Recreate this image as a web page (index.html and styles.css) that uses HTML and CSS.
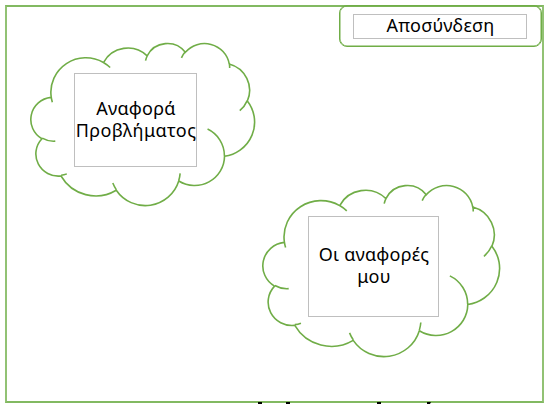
FILE: index.html
```
<!DOCTYPE html>
<html lang="el">
<head>
<meta charset="utf-8">
<title>Αναφορές</title>
<link rel="stylesheet" href="styles.css">
</head>
<body>
<main class="screen">
  <header class="bar">
    <div class="logout"><button class="label logout-label">Αποσύνδεση</button></div>
  </header>
  <section class="cloud cloud-report">
    <svg class="outline" viewBox="0 0 43200 43200" preserveAspectRatio="none"><path></path></svg>
    <button class="label report-label"><span>Αναφορά<br><span class="wide">Προβλήματος</span></span></button>
  </section>
  <section class="cloud cloud-mine">
    <svg class="outline" viewBox="0 0 43200 43200" preserveAspectRatio="none"><path></path></svg>
    <button class="label mine-label">Οι αναφορές<br>μου</button>
  </section>
  <svg class="marks" viewBox="0 0 180 3"><path d="M2 1h4v2h-4zM30 1h4v2h-4zM121 1h4v2h-4zM171 1h4l-1 2h-3z"/></svg>
</main>
<script src="cloud.js"></script>
</body>
</html>
```
FILE: styles.css
```
* { box-sizing: border-box; }
body {
  margin: 0;
  width: 548px;
  height: 406px;
  overflow: hidden;
  background: #fff;
  font-family: "Noto Sans", "Open Sans", sans-serif;
}
.screen {
  position: relative;
  width: 539px;
  height: 398px;
  margin: 5px 0 0 5px;
  border: 2px solid #82b961;
  border-left-color: #92c274;
  border-right-color: #92c274;
}
.bar {
  display: flex;
  justify-content: flex-end;
  height: 41px;
  margin-top: -2px;
}
.logout {
  width: 203px;
  height: 42px;
  padding: 8px 0 0 13px;
  border: 1.5px solid #70ad47;
  border-radius: 8px;
  box-shadow: inset 0 0 0 .5px #70ad47;
}
.label {
  display: flex;
  align-items: center;
  justify-content: center;
  padding: 0 0 2px 1px;
  border: 1px solid #bfbfbf;
  background: #fff;
  color: #000;
  font: 18px/22px "Noto Sans", "Open Sans", sans-serif;
  letter-spacing: .25px;
  text-align: center;
  white-space: nowrap;
}
.wide {
  margin: 0 -4px;
  letter-spacing: .42px;
}
.logout-label {
  width: 174px;
  height: 25px;
  padding-bottom: 3px;
}
.cloud {
  position: absolute;
}
.cloud-report {
  left: 24px;
  top: 36px;
  width: 225px;
  height: 163px;
  padding: 30px 0 0 43px;
}
.cloud-mine {
  left: 256px;
  top: 178px;
  width: 238px;
  height: 172px;
  padding: 31px 0 0 45px;
}
.report-label { position: relative; width: 123px; height: 94px; }
.mine-label { position: relative; width: 131px; height: 101px; padding-bottom: 4px; }
.outline {
  position: absolute;
  top: 0;
  left: 0;
  width: calc(100% - 1.5px);
  height: calc(100% - 1px);
  overflow: visible;
}
.outline path {
  fill: none;
  stroke: #70ad47;
  stroke-width: 1.6px;
  vector-effect: non-scaling-stroke;
}
.marks {
  position: absolute;
  left: 249px;
  top: 394px;
  width: 180px;
  height: 3px;
}
```
FILE: cloud.js
```
// Each run: start x, start y, then arcs of [rx, ry, start angle, sweep],
// angles in 60000ths of a degree.
const runs = [
  [3900, 14370,
    [6753, 9190, -11429249, 7426832], [5333, 7267, -8646143, 5396714],
    [4365, 5945, -8748475, 5983381], [4857, 6595, -7859164, 7034504],
    [5333, 7273, -4722533, 6541615], [6775, 9220, -2776035, 7816140],
    [5785, 7867, 37501, 6842000], [6752, 9215, 1347096, 6910353],
    [7720, 10543, 3974558, 4542661], [4360, 5918, -16496525, 8804134],
    [4345, 5945, -14809710, 9151131]],
  [4693, 26177, [4345, 5945, 5204520, 1585770]],
  [6928, 34899, [4360, 5918, 4416628, 686848]],
  [16478, 39090, [6752, 9215, 8257449, 844866]],
  [28827, 34751, [6752, 9215, 387196, 959901]],
  [34129, 22954, [5785, 7867, -4217541, 4255042]],
  [41798, 15354, [5333, 7273, 1819082, 1665090]],
  [38324, 5426, [4857, 6595, -824660, 891534]],
  [29078, 3952, [4857, 6595, -8950887, 1091722]],
  [22141, 4720, [4365, 5945, -9809656, 1061181]],
  [14000, 5192, [6753, 9190, -4002417, 739161]],
  [4127, 15789, [6753, 9190, 9459261, 711490]]
];

function param(rx, ry, angle) {
  const a = angle / 60000 * Math.PI / 180;
  return Math.atan2(rx * Math.sin(a), ry * Math.cos(a));
}

let d = "";
for (const [x0, y0, ...arcs] of runs) {
  let x = x0, y = y0;
  d += `M${x} ${y}`;
  for (const [rx, ry, start, sweep] of arcs) {
    const t0 = param(rx, ry, start);
    const t1 = param(rx, ry, start + sweep);
    x += rx * (Math.cos(t1) - Math.cos(t0));
    y += ry * (Math.sin(t1) - Math.sin(t0));
    d += `A${rx} ${ry} 0 ${sweep > 10800000 ? 1 : 0} 1 ${x.toFixed(1)} ${y.toFixed(1)}`;
  }
}
document.querySelectorAll(".outline path").forEach(p => p.setAttribute("d", d));
```
